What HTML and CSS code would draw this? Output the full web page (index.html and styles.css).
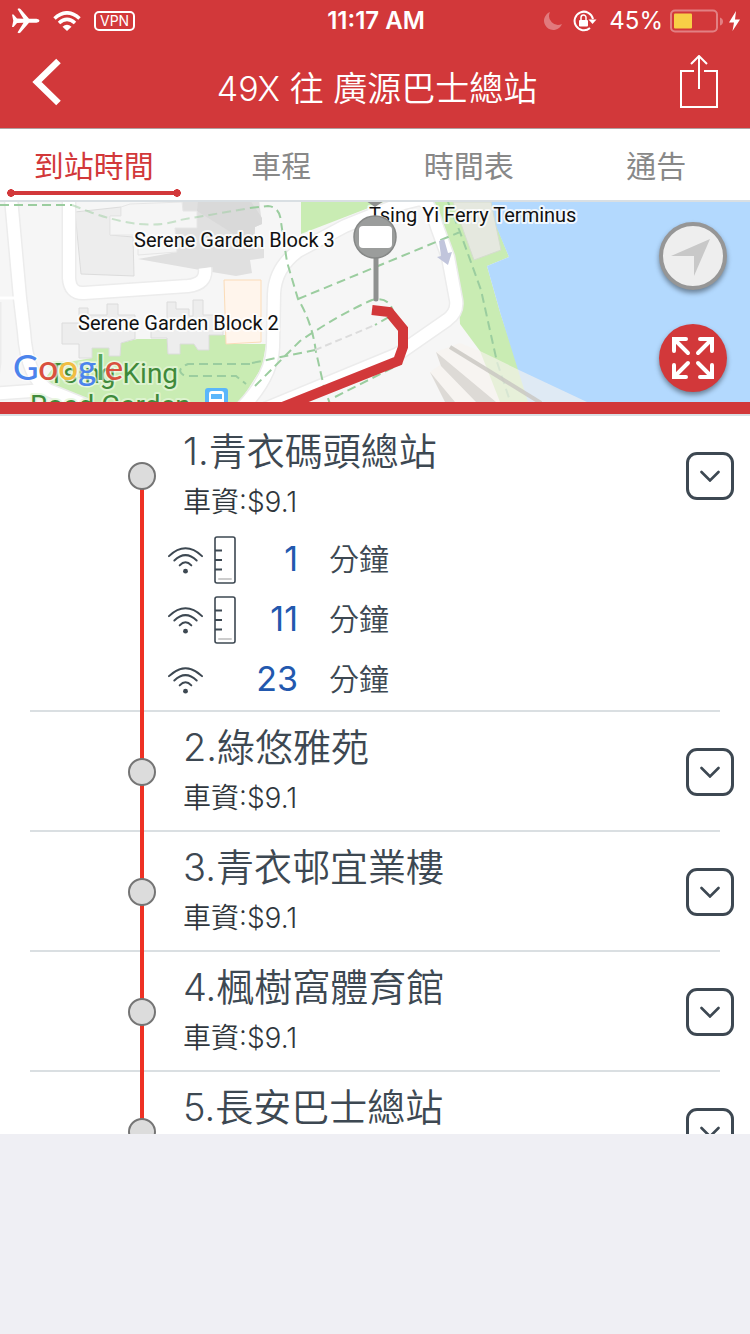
FILE: index.html
```html
<!DOCTYPE html>
<html lang="zh-Hant">
<head>
    <meta charset="UTF-8">
    <meta name="viewport" content="width=device-width, initial-scale=1.0">
    <title>49X 往 廣源巴士總站</title>
    <link rel="stylesheet" href="styles.css">
</head>
<body>
    <!-- shared icons -->
    <svg class="symbols" width="0" height="0" aria-hidden="true">
        <symbol id="signal" viewBox="0 0 36 28">
            <g fill="none" stroke="#3d4852" stroke-width="2" stroke-linecap="round">
                <path d="M1 10Q18 -6 35 10"/>
                <path d="M6.500 14.500Q18 3.500 29.500 14.500"/>
                <path d="M12 19.500Q18 13 24 19.500"/>
            </g>
            <circle cx="18" cy="25.500" r="2.500" fill="#3d4852"/>
        </symbol>
        <symbol id="bus" viewBox="0 0 22 48">
            <rect x="1" y="1" width="20" height="46" rx="2" fill="#fff" stroke="#3d4852" stroke-width="1.600"/>
            <path d="M1 14.500h7M1 24h7M1 33.500h7" stroke="#3d4852" stroke-width="1.800"/>
            <path d="M5 43h12" stroke="#ccc" stroke-width="2" stroke-linecap="round"/>
        </symbol>
        <symbol id="chevron" viewBox="0 0 20 12">
            <path d="M1.500 2L10 10.500L18.500 2" fill="none" stroke="#3d4852" stroke-width="2.600" stroke-linecap="round"/>
        </symbol>
    </svg>

    <div class="app">
        <header class="header">
            <div class="status">
                <div class="status-left">
                    <svg width="28" height="26" viewBox="0 0 28 26" fill="#fff">
                        <path d="M0 6.500h1.500L5 10.500l6.500 .3L5.500 1L7 .3L8.500 1L17 10.800H24.500Q27.500 11.500 27.500 12.800T24.500 14.800H17L8.500 24.500L7 25.200L5.500 24.500L11.500 14.800L5 15L1.500 19H0L1.300 12.800z"/>
                    </svg>
                    <svg width="28" height="20" viewBox="0 0 28 20" fill="none" stroke="#fff" stroke-width="3.600">
                        <path d="M1.500 7.500Q14 -3.800 26.500 7.500"/>
                        <path d="M6 12Q14 4.800 22 12"/>
                        <path d="M14 20l-4.500-4.200Q14 11.800 18.500 15.800z" fill="#fff" stroke="none"/>
                    </svg>
                    <span class="vpn">VPN</span>
                </div>
                <span class="clock">11:17 AM</span>
                <div class="status-right">
                    <svg width="18" height="18" viewBox="0 0 18 18" fill="#e17a7d">
                        <path d="M6 0A9.300 9.300 0 1 0 18 12A9 9 0 0 1 6 0z"/>
                    </svg>
                    <svg width="24" height="22" viewBox="0 0 24 22" fill="none" stroke="#fff" stroke-width="2">
                        <path d="M20 9A9.300 9.300 0 1 0 17 18"/>
                        <path d="M15.500 9.500h8l-4 4.500z" fill="#fff" stroke="none"/>
                        <rect x="6" y="10" width="9" height="6.500" rx="1" fill="#fff" stroke="none"/>
                        <path d="M8 10V7.500a2.500 2.500 0 0 1 5 0V10" stroke-width="1.500"/>
                    </svg>
                    <span class="percent">45%</span>
                    <svg width="70" height="24" viewBox="0 0 70 24">
                        <rect x="1" y="1.500" width="46" height="21" rx="4" fill="none" stroke="#e28083" stroke-width="2"/>
                        <rect x="4" y="4.500" width="18" height="15" rx="1" fill="#f8cf46"/>
                        <path d="M50 8.500q3 1 3 4t-3 4z" fill="#e28083"/>
                        <path d="M66 2L59 13.500h5L62.500 22L70 10.500h-5z" fill="#fff"/>
                    </svg>
                </div>
            </div>
            <nav class="navbar">
                <button class="nav-button" type="button" aria-label="返回">
                    <svg width="32" height="50" viewBox="0 0 32 50">
                        <path d="M28.500 4L7 25L28.500 46" fill="none" stroke="#fff" stroke-width="6.500"/>
                    </svg>
                </button>
                <h1>49X 往 廣源巴士總站</h1>
                <button class="nav-button" type="button" aria-label="分享">
                    <svg width="40" height="54" viewBox="0 0 40 54" fill="none" stroke="#fff" stroke-width="2">
                        <path d="M14 16H1v36h36V16H24"/>
                        <path d="M19 34V1M11 9l8-8l8 8"/>
                    </svg>
                </button>
            </nav>
        </header>

        <nav class="tabs">
            <a class="tab active" href="#arrival">到站時間</a>
            <a class="tab" href="#journey">車程</a>
            <a class="tab" href="#timetable">時間表</a>
            <a class="tab" href="#notice">通告</a>
        </nav>

        <section class="map">
            <svg class="map-canvas" viewBox="0 0 750 200" preserveAspectRatio="xMidYMid slice">
                <defs>
                    <!-- same road geometry is drawn twice: casing and fill -->
                    <g id="roads" fill="none" stroke-linejoin="round">
                        <path d="M11 -4L20 96L24 130Q27 175 48 188L90 205"/>
                        <path d="M-6 100V160L-10 192L45 188"/>
                        <path d="M69 -4V76Q70 92 84 91L188 84Q207 82 205 66"/>
                        <path d="M240 208Q272 175 273 145L274 92Q275 66 298 49L345 24L400 2L420 -3Q430 0 437 25L448 55L456 98Q458 110 447 118L398 152L260 209"/>
                    </g>
                </defs>
                <rect width="750" height="200" fill="#f6f6f6"/>

                <!-- parks -->
                <g fill="#c9ecb3">
                    <path d="M40 183L56 162L92 156V146H109V154H120L121 141L137 137H167L168 152H180V142H194L198 148H209V133H226V142H266L262 165L240 200H78z"/>
                    <path d="M301 0H384L301 32z"/>
                    <path d="M428 0H487L509 55L487 64L500 110L530 200H500L480 149L460 122L458 80z"/>
                </g>
                <path d="M486 0H750V200H528L500 110L487 64L509 55z" fill="#b3d9fe"/>
                <path d="M453 0H491L501 48L474 58z" fill="#e5e8df" stroke="#d5dccf"/>

                <!-- buildings -->
                <path d="M182 -2H259L262 22L255 25L254 40L264 45V56L250 58L252 71L236 74L200 68L138 57L177 50L175 26H197V9H183z" fill="#e0e0e0"/>
                <path d="M198 -2H250L262 16V22L255 25L254 40L240 36L197 9z" fill="#d9d9d9"/>
                <g fill="#ededed" stroke="#dcdcdc">
                    <path d="M75 10L121 5V14H110V33L133 35L134 74L81 72z"/>
                    <path d="M62 121H79V106H88V113H107V102H118V113H135V137L121 141L120 154H109V146H92V156H79V142H62z"/>
                    <path d="M151 121H167V100H176V107H189V114H193V98H203V113H223V133H209V148H198L194 142H180V152H168L167 136H151z"/>
                </g>
                <path d="M121 5L130 2L182 0L183 9H197V26H175L177 50L138 53V33H110V14H121z" fill="#f5f5f5" stroke="#e6e6e6"/>
                <path d="M224 78H261V140L226 142z" fill="#fff5ec" stroke="#fbdcb8"/>

                <!-- roads -->
                <use href="#roads" stroke="#ececec" stroke-width="15"/>
                <use href="#roads" stroke="#fff" stroke-width="12"/>
                <path d="M0 96H15" stroke="#fff" stroke-width="3"/>

                <!-- footpaths -->
                <g fill="none" stroke="#9bcd9f" stroke-width="2" stroke-dasharray="9 5">
                    <path d="M0 3H72"/>
                    <path d="M72 3L90 10Q145 30 180 18L250 6" opacity=".5"/>
                    <path d="M250 6L268 4Q280 5 281 20L287 60L298 97Q312 120 316 150L324 185L330 202"/>
                    <path d="M298 97L395 57L460 30M448 0L460 30L481 88L497 160L511 202"/>
                    <path d="M255 184L300 139Q340 112 372 98Q390 94 394 112L375 123"/>
                    <path d="M252 161L315 148M335 195L402 161"/>
                    <path d="M250 162H188Q174 168 185 174H236L246 182"/>
                </g>
                <path d="M315 148L375 123" stroke="#dcdcdc" stroke-width="2" stroke-dasharray="7 4"/>
                <path d="M439 39l5-2l4 14l4-1l-4 13l-11-8l4-1z" fill="#c1c5dc"/>

                <!-- pier roof -->
                <path d="M430 170L443 161L436 150L460 141L480 149L519 168L587 200H445z" fill="#f8f3ee" opacity=".65"/>
                <path d="M436 150L496 200H476L441 164zM430 170L455 200H445z" fill="#dddad6"/>
                <path d="M450 145L541 201" stroke="#c8c5c0" stroke-opacity=".8" stroke-width="4"/>

                <path class="route" d="M372 108L389 110L403 127V145L398 159L270 210"/>

                <g class="place">
                    <text x="134" y="45">Serene Garden Block 3</text>
                    <text x="78" y="128">Serene Garden Block 2</text>
                    <text x="369" y="20">Tsing Yi Ferry Terminus</text>
                </g>
                <g class="place park">
                    <text x="48" y="181">Tsing King</text>
                    <text x="30" y="213">Road Garden</text>
                </g>
                <text class="google" x="13" y="178"><tspan fill="#4c84ec">G</tspan><tspan fill="#d9503f">o</tspan><tspan fill="#f2bd42">o</tspan><tspan fill="#4c84ec">g</tspan><tspan fill="#57a75c">l</tspan><tspan fill="#d9503f">e</tspan></text>

                <rect x="205" y="186" width="23" height="24" rx="3" fill="#5ab6fb"/>
                <path d="M209 204V192q0-3 3-3h9q3 0 3 3v12z" fill="#fff"/>
                <path d="M211 192h11v5h-11z" fill="#5ab6fb"/>

                <!-- stop pin -->
                <path d="M366 -1L375 5L384 -1z" fill="#8f9190"/>
                <path d="M376 57V97" stroke="#8f9190" stroke-width="5" stroke-linecap="round"/>
                <circle cx="375" cy="35" r="21" fill="#9b9d9c" stroke="#868887" stroke-width="1.500"/>
                <rect x="359" y="24" width="33" height="22" rx="4" fill="#fff"/>
            </svg>

            <div class="map-buttons">
                <button class="round-button locate" type="button" aria-label="目前位置">
                    <svg width="40" height="40" viewBox="0 0 40 40">
                        <path d="M39 3L0 20H23V40z" fill="#c8c8c8"/>
                    </svg>
                </button>
                <button class="round-button expand" type="button" aria-label="放大地圖">
                    <svg width="42" height="42" viewBox="0 0 42 42" fill="none" stroke="#fff" stroke-width="4" stroke-linecap="round">
                        <path d="M2 14V2H14M3 3L16 16M28 2H40V14M39 3L26 16M2 28V40H14M3 39L16 26M28 40H40V28M39 39L26 26"/>
                    </svg>
                </button>
            </div>
        </section>

        <ol class="stops">
            <li class="stop first">
                <div class="rail"></div>
                <div class="info">
                    <h2>1.青衣碼頭總站</h2>
                    <p class="fare">車資:$9.1</p>
                    <ul class="arrivals">
                        <li>
                            <svg class="signal"><use href="#signal"/></svg>
                            <svg class="bus"><use href="#bus"/></svg>
                            <span class="minutes">1</span>
                            <span class="unit">分鐘</span>
                        </li>
                        <li>
                            <svg class="signal"><use href="#signal"/></svg>
                            <svg class="bus"><use href="#bus"/></svg>
                            <span class="minutes">11</span>
                            <span class="unit">分鐘</span>
                        </li>
                        <li>
                            <svg class="signal"><use href="#signal"/></svg>
                            <span class="bus"></span>
                            <span class="minutes">23</span>
                            <span class="unit">分鐘</span>
                        </li>
                    </ul>
                </div>
                <button class="toggle" type="button" aria-label="展開"><svg width="20" height="12"><use href="#chevron"/></svg></button>
            </li>
            <li class="stop">
                <div class="rail"></div>
                <div class="info">
                    <h2>2.綠悠雅苑</h2>
                    <p class="fare">車資:$9.1</p>
                </div>
                <button class="toggle" type="button" aria-label="展開"><svg width="20" height="12"><use href="#chevron"/></svg></button>
            </li>
            <li class="stop">
                <div class="rail"></div>
                <div class="info">
                    <h2>3.青衣邨宜業樓</h2>
                    <p class="fare">車資:$9.1</p>
                </div>
                <button class="toggle" type="button" aria-label="展開"><svg width="20" height="12"><use href="#chevron"/></svg></button>
            </li>
            <li class="stop">
                <div class="rail"></div>
                <div class="info">
                    <h2>4.楓樹窩體育館</h2>
                    <p class="fare">車資:$9.1</p>
                </div>
                <button class="toggle" type="button" aria-label="展開"><svg width="20" height="12"><use href="#chevron"/></svg></button>
            </li>
            <li class="stop">
                <div class="rail"></div>
                <div class="info">
                    <h2>5.長安巴士總站</h2>
                    <p class="fare">車資:$9.1</p>
                </div>
                <button class="toggle" type="button" aria-label="展開"><svg width="20" height="12"><use href="#chevron"/></svg></button>
            </li>
        </ol>

        <footer class="footer"></footer>
    </div>
</body>
</html>
```
FILE: styles.css
```css
*, *::before, *::after {
    box-sizing: border-box;
}

body {
    font-family: Inter, "Noto Sans CJK TC", sans-serif;
    background-color: #efeff4;
    color: #3d4852;
    margin: 0;
}

h1, h2, p, ol, ul {
    margin: 0;
    padding: 0;
    font-weight: normal;
    list-style: none;
}

button {
    padding: 0;
    border: none;
    background: none;
    cursor: pointer;
}

svg {
    display: block;
    flex: none;
}

.symbols {
    position: absolute;
}

.app {
    display: flex;
    flex-direction: column;
    height: 100vh;
}

/* header */
.header {
    background-color: #d2383a;
    color: #fff;
    border-bottom: 1px solid #b0a0a0;
}

.status {
    display: grid;
    grid-template-columns: 1fr auto 1fr;
    align-items: center;
    height: 41px;
    padding: 0 10px 0 12px;
}

.status-left, .status-right {
    display: flex;
    align-items: center;
}

.status-left {
    gap: 13px;
}

.status-right {
    justify-content: flex-end;
}

.vpn {
    border: 2px solid #fff;
    border-radius: 5px;
    font-size: 14px;
    line-height: 16px;
    padding: 0 4px;
}

.clock {
    font-size: 24px;
    font-weight: 600;
}

.percent {
    font-size: 24px;
    margin: 0 7px 0 12px;
}

.status-right svg + svg {
    margin-left: 11px;
}

.navbar {
    display: flex;
    align-items: center;
    justify-content: space-between;
    height: 87px;
    padding: 0 30px;
}

.navbar h1 {
    font-size: 34px;
    font-weight: 350;
    line-height: 48px;
    padding: 8px 0 0 4px;
}

.nav-button {
    width: 40px;
    padding-bottom: 6px;
}

/* tabs */
.tabs {
    display: flex;
    height: 73px;
    background-color: #fff;
    border-bottom: 2px solid #d9dfe3;
}

.tab {
    position: relative;
    flex: 1;
    color: #888;
    font-size: 30px;
    line-height: 74px;
    text-align: center;
    text-decoration: none;
}

.tab.active {
    color: #d2383a;
}

.tab.active::after {
    content: "";
    position: absolute;
    left: 7px;
    right: 7px;
    bottom: 3px;
    height: 8px;
    background:
        radial-gradient(circle closest-side, #d2383a 90%, transparent) left / 8px 8px no-repeat,
        radial-gradient(circle closest-side, #d2383a 90%, transparent) right / 8px 8px no-repeat,
        linear-gradient(#d2383a, #d2383a) center / calc(100% - 8px) 4px no-repeat;
}

/* map */
.map {
    position: relative;
    border-bottom: 2px solid #d9dfe3;
}

.map::after {
    content: "";
    display: block;
    height: 12px;
    background-color: #d2383a;
}

.map-canvas {
    width: 100%;
    height: 200px;
}

.route {
    fill: none;
    stroke: #d2383a;
    stroke-width: 10;
}

.place {
    font-family: Roboto, sans-serif;
    font-size: 20px;
    fill: #111;
    stroke: #fff;
    stroke-opacity: .8;
    stroke-width: 4px;
    stroke-linejoin: round;
    paint-order: stroke;
}

.place.park {
    font-size: 28px;
    fill: #3f8a3a;
    stroke: #e3f5d8;
}

.google {
    font-family: Lato, sans-serif;
    font-size: 35px;
    font-weight: 500;
    stroke: #fff;
    stroke-opacity: .6;
    stroke-width: 3px;
    paint-order: stroke;
}

.map-buttons {
    position: absolute;
    top: 20px;
    right: 23px;
    display: flex;
    flex-direction: column;
    gap: 34px;
}

.round-button {
    display: flex;
    align-items: center;
    justify-content: center;
    width: 68px;
    height: 68px;
    border-radius: 50%;
    box-shadow: 0 3px 5px rgba(0, 0, 0, 0.4);
}

.locate {
    background-color: #eee;
    border: 4px solid #969696;
}

.locate svg {
    margin-right: 4px;
}

.expand {
    background-color: #d2383a;
}

/* stop list */
.stops {
    flex: 1;
    min-height: 0;
    overflow-y: auto;
    scrollbar-width: none;
    background-color: #fff;
}

.stop {
    display: grid;
    grid-template-columns: 28px 1fr 48px;
    min-height: 120px;
    margin: 0 30px;
    padding-left: 98px;
    border-bottom: 2px solid #dadfe2;
}

/* runs over the divider so the line stays unbroken */
.rail {
    margin-bottom: -2px;
    padding-top: 46px;
    background: linear-gradient(#ee3124, #ee3124) center / 4px 100% no-repeat;
}

.rail::before {
    content: "";
    display: block;
    height: 28px;
    background-color: #dcdcdc;
    border: 2px solid #757575;
    border-radius: 50%;
}

.first .rail {
    background-position: center 60px;
}

.info {
    padding: 8px 0 0 12px;
}

.info h2 {
    font-size: 38px;
    font-weight: 350;
    line-height: 54px;
    margin-left: 15px;
}

.fare {
    color: #2f363c;
    font-size: 28px;
    font-weight: 350;
    line-height: 48px;
    margin-left: 15px;
}

.arrivals {
    padding-top: 4px;
}

.arrivals li {
    display: flex;
    align-items: center;
    height: 60px;
}

.signal {
    width: 35px;
    height: 28px;
}

.bus {
    width: 22px;
    height: 48px;
    margin-left: 11px;
}

.minutes {
    width: 62px;
    color: #2258ae;
    font-size: 34px;
    text-align: right;
}

.unit {
    font-size: 30px;
    font-weight: 350;
    margin-left: 31px;
}

.minutes, .unit {
    line-height: 56px;
    padding-bottom: 2px;
}

.toggle {
    display: flex;
    align-items: center;
    justify-content: center;
    width: 48px;
    height: 48px;
    margin: 36px 0 0 14px;
    border: 3px solid #3d4852;
    border-radius: 11px;
}

/* empty banner area */
.footer {
    flex: none;
    height: 200px;
}
```
